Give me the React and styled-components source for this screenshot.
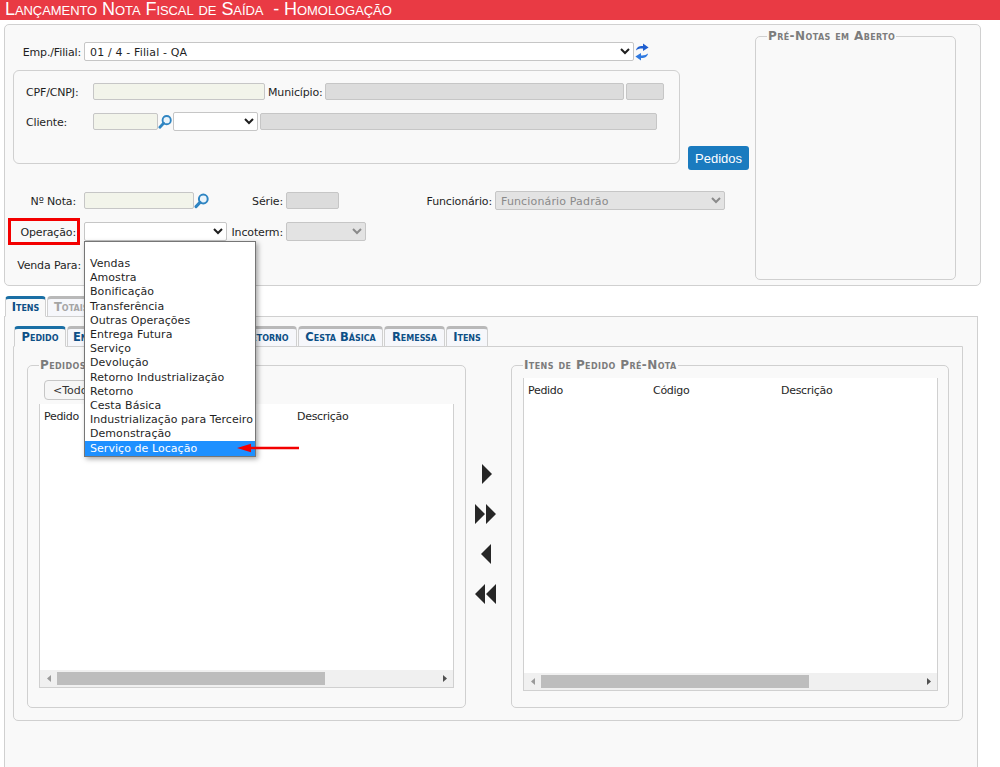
import React from 'react';
import styled, { createGlobalStyle } from 'styled-components';

const Global = createGlobalStyle`
  html, body { margin: 0; padding: 0; height: 767px; overflow: hidden; background: #fff; }
  body { font-family: "DejaVu Sans", Verdana, sans-serif; font-size: 11px; color: #1f1f1f; }
  * { box-sizing: border-box; }
`;

const Page = styled.div`display: flex; flex-direction: column; height: 767px; overflow: hidden;`;
const TitleBar = styled.header`
  height: 20px; flex: none; background: #e93a44; color: #fff; padding-left: 5px;
  font: 18px/18px "Liberation Sans", Arial, sans-serif; font-variant: small-caps; white-space: pre; letter-spacing: -0.07px;
`;
const TopPanel = styled.section`
  flex: none; height: 262px; margin: 4px 19px 0 4px; display: flex; background: #f9f9f9;
  border: 1px solid #d0d0d0; border-radius: 5px;
`;
const FormColumn = styled.div`width: 750px; flex: none; padding-top: 17px;`;
const Row = styled.div`
  display: flex; align-items: center; height: ${p => p.$h || 19}px; margin-top: ${p => p.$top || 0}px;
`;
const Label = styled.label`
  flex: none; width: ${p => p.$w}px; margin-left: ${p => p.$left || 0}px; margin-right: 3px; padding-top: 2px;
  text-align: ${p => p.$align || 'right'}; white-space: nowrap; letter-spacing: -0.15px;
`;
const Field = styled.input`
  flex: none; width: ${p => p.$w}px; height: 17px; margin: 0 0 0 ${p => p.$left || 0}px; padding: 0;
  border: 1px solid #c6c6c6; border-radius: 2px; background: ${p => (p.$editable ? '#f2f4ea' : '#dcdcdc')};
`;
const Select = styled.select`
  flex: none; width: ${p => p.$w || 100}px; height: 19px; margin: 0 0 0 ${p => p.$left || 0}px; padding: 1px 0 0 1px;
  border: 1px solid #c6c6c6; border-radius: 2px; background-color: ${p => (p.disabled ? '#e3e3e3' : '#fff')};
  color: ${p => (p.disabled ? '#8a8a8a' : '#1f1f1f')};
  font: 11px "DejaVu Sans", Verdana, sans-serif; letter-spacing: 0.15px; opacity: 1;
`;
const GroupRow = styled.div`display: flex; align-items: flex-end; height: 100px; margin: 9px 0 0 8px;`;
const Group = styled.div`
  align-self: flex-start; width: 667px; height: 94px; padding: 12px 0 0 12px;
  border: 1px solid #d0d0d0; border-radius: 6px;
`;
const PrimaryButton = styled.button`
  width: 61px; height: 24px; margin-left: 8px; padding: 0; border: 0; border-radius: 3px;
  background: #1a7bbf; color: #fff; font: 13px "Liberation Sans", Arial, sans-serif;
`;
const IconSlot = styled.span`
  flex: none; width: ${p => p.$w || 14}px; height: ${p => p.$h || 16}px; display: flex; align-items: center; justify-content: center;
`;
const Fieldset = styled.fieldset`
  flex: none; margin: ${p => p.$margin || 0}; padding: ${p => p.$pad || 0}; min-width: 0;
  width: ${p => p.$w}px; height: ${p => p.$h}px;
  border: 1px solid #d0d0d0; border-radius: 5px; display: flex; flex-direction: column;
`;
const Legend = styled.legend`
  padding: 0 1px; height: 14px; line-height: 14px; color: #7c7c7c;
  font-weight: bold; font-size: 12px; font-variant: small-caps; white-space: nowrap;
  font-family: "DejaVu Sans", Verdana, sans-serif; letter-spacing: 0.4px;
`;
const SelectAnchor = styled.div`
  position: relative; flex: none; height: 19px; width: ${p => p.$w}px; margin-left: ${p => p.$left || 0}px;
`;
const FullSelect = styled(Select)`display: block; width: 100%; margin: 0;`;
const Dropdown = styled.ul`
  position: absolute; z-index: 5; top: 100%; left: 0; width: 172px; height: 216px; margin: 0; padding: 15px 0 0;
  background: #fff; border: 1px solid #767676; list-style: none;
  box-shadow: 2px 2px 5px rgba(0,0,0,.35);
`;
const Option = styled.li`
  position: relative; height: 14.2px; line-height: ${p => (p.$active ? 15.5 : 14.2)}px; padding-left: 5px; white-space: nowrap; letter-spacing: 0.05px;
  background: ${p => (p.$active ? '#1e90ff' : 'transparent')}; color: ${p => (p.$active ? '#fff' : '#1f1f1f')};
`;
const ArrowNote = styled.svg`position: absolute; left: 152px; top: 2px; width: 62px; height: 10px;`;
const RedBox = styled.div`
  position: absolute; left: 8px; top: 218px; width: 72px; height: 27px; border: 3px solid #f30000; z-index: 3;
`;
const TabBar = styled.div`
  flex: none; display: flex; align-items: flex-end; height: 20px; margin-left: ${p => p.$left || 0}px; position: relative; z-index: 1;
  margin-top: ${p => p.$top || 0}px;
`;
const Tab = styled.div`
  flex: none; width: ${p => p.$w}px; height: 21px; margin: 0 1px -1px 0; padding: 1px 0 0 ${p => p.$inset || 0}px;
  text-align: ${p => (p.$inset ? 'left' : 'center')};
  border: 1px solid #d0d0d0; border-top: 3px solid ${p => (p.$active ? '#1a6fa5' : '#b9b9b9')};
  border-bottom-color: ${p => (p.$active ? '#f9f9f9' : '#d0d0d0')}; border-radius: 4px 4px 0 0;
  background: ${p => (p.$active ? '#f9f9f9' : '#f6f7fb')}; color: ${p => p.$color || '#0d4f86'};
  font-size: 11.5px; font-weight: bold; font-variant: small-caps; line-height: 14px; white-space: nowrap;
`;
const TabPanel = styled.section`
  flex: 1; min-height: 0; margin: 0 22px 0 4px; padding-top: 9px; background: #f9f9f9;
  border: 1px solid #d0d0d0; border-bottom: 0; display: flex; flex-direction: column;
`;
const SubPanel = styled.div`
  flex: none; width: 950px; height: 375px; margin-left: 8px; display: flex; padding: 11px 0 0 13px;
  border: 1px solid #d0d0d0; border-radius: 0 0 5px 5px;
`;
const FilterButton = styled.button`
  flex: none; width: 62px; height: 20px; margin: 0 0 4px 5px; padding: 0 0 0 8px; text-align: left;
  border: 1px solid #c6c6c6; border-radius: 4px; background: #f6f6f6; color: #333;
  font: 11px "DejaVu Sans", Verdana, sans-serif;
`;
const List = styled.div`
  flex: 1; min-height: 0; display: flex; flex-direction: column; background: #fff;
  border: 1px solid #d0d0d0; border-top: 0;
`;
const ListHead = styled.div`flex: 1; display: flex; padding: 6px 0 0 4px; align-items: flex-start;`;
const Col = styled.span`flex: none; width: ${p => p.$w}px; letter-spacing: -0.3px;`;
const ScrollBar = styled.div`flex: none; height: 17px; display: flex; align-items: center; background: #f0f0f0;`;
const ScrollButton = styled.span`flex: none; width: 17px; display: flex; justify-content: center;`;
const ScrollTrack = styled.div`flex: 1;`;
const Thumb = styled.div`height: 13px; background: #bdbdbd; width: ${p => p.$w}px;`;
const TransferColumn = styled.div`
  flex: none; width: 45px; display: flex; flex-direction: column; align-items: center; padding: 106px 6px 0 0; gap: 20px;
`;
const TransferButton = styled.svg`display: block; width: 22px; height: 20px;`;

const Lens = () => (
  <svg width="15" height="16" viewBox="0 0 15 16">
    <circle cx="9.3" cy="6" r="4.4" fill="#eaf4fb" stroke="#2f85c2" strokeWidth="2" />
    <path d="M6 9.4 2 13.6" stroke="#2f85c2" strokeWidth="3" strokeLinecap="round" />
  </svg>
);
const Refresh = () => (
  <svg width="14" height="18" viewBox="0 0 14 18">
    <path d="M1 7.5C1.5 4 4.5 2.8 8 3V0.6L13.6 4.6 8 8V5.6C5 5.4 2.8 6 1 7.5Z" fill="#1f5fd0" />
    <path d="M13 10.5C12.5 14 9.5 15.2 6 15V17.4L0.4 13.4 6 10V12.4C9 12.6 11.2 12 13 10.5Z" fill="#2f79e0" />
  </svg>
);
const Chevron = ({ dir, color }) => (
  <svg width="6" height="9" viewBox="0 0 6 9">
    <path d={dir === 'left' ? 'M5 1V8L1 4.5Z' : 'M1 1V8L5 4.5Z'} fill={color} />
  </svg>
);
const Transfer = ({ d }) => (
  <TransferButton viewBox="0 0 22 20"><path d={d} fill="#262626" /></TransferButton>
);
const Scroll = ({ thumb }) => (
  <ScrollBar>
    <ScrollButton><Chevron dir="left" color="#9a9a9a" /></ScrollButton>
    <ScrollTrack><Thumb $w={thumb} /></ScrollTrack>
    <ScrollButton><Chevron dir="right" color="#505050" /></ScrollButton>
  </ScrollBar>
);

const options = ['Vendas', 'Amostra', 'Bonificação', 'Transferência', 'Outras Operações', 'Entrega Futura', 'Serviço', 'Devolução', 'Retorno Industrialização', 'Retorno', 'Cesta Básica', 'Industrialização para Terceiro', 'Demonstração'];

export default function App() {
  return (
    <Page>
      <Global />
      <RedBox />
      <TitleBar>{'Lançamento Nota Fiscal de Saída  - Homologação'}</TitleBar>
      <TopPanel>
        <FormColumn>
          <Row>
            <Label $w={76}>Emp./Filial:</Label>
            <Select $w={550}><option>01 / 4 - Filial - QA</option></Select>
            <IconSlot $w={16} $h={19}><Refresh /></IconSlot>
          </Row>
          <GroupRow>
            <Group>
              <Row $h={17}>
                <Label $w={64} $align="left">CPF/CNPJ:</Label>
                <Field $editable $w={172} readOnly />
                <Label $w={54} $left={3}>Município:</Label>
                <Field $w={299} readOnly />
                <Field $w={38} $left={2} readOnly />
              </Row>
              <Row $h={17} $top={13}>
                <Label $w={64} $align="left">Cliente:</Label>
                <Field $editable $w={65} readOnly />
                <IconSlot><Lens /></IconSlot>
                <Select $w={85} $left={1}><option></option></Select>
                <Field $w={397} $left={2} readOnly />
              </Row>
            </Group>
            <PrimaryButton>Pedidos</PrimaryButton>
          </GroupRow>
          <Row $top={21}>
            <Label $w={71}>Nº Nota:</Label>
            <Field $editable $left={5} $w={110} readOnly />
            <IconSlot $w={15}><Lens /></IconSlot>
            <Label $w={40} $left={34}>Série:</Label>
            <Field $w={53} readOnly />
            <Label $w={66} $left={87}>Funcionário:</Label>
            <Select $w={230} disabled><option>Funcionário Padrão</option></Select>
          </Row>
          <Row $top={12}>
            <Label $w={71}>Operação:</Label>
            <SelectAnchor $w={143} $left={5}>
              <FullSelect><option></option></FullSelect>
              <Dropdown>
                {options.map(o => <Option key={o}>{o}</Option>)}
                <Option $active>
                  Serviço de Locação
                  <ArrowNote viewBox="0 0 62 10">
                    <path d="M0 5 14 0.8V3.8H62V6.2H14V9.2Z" fill="#f30000" />
                  </ArrowNote>
                </Option>
              </Dropdown>
            </SelectAnchor>
            <Label $w={54} $left={2}>Incoterm:</Label>
            <Select $w={80} disabled><option></option></Select>
          </Row>
          <Row $top={14}>
            <Label $w={76}>Venda Para:</Label>
          </Row>
        </FormColumn>
        <Fieldset $w={201} $h={251} $margin="4px 0 0 0" $pad="0 0 0 11px">
          <Legend>Pré-Notas em Aberto</Legend>
        </Fieldset>
      </TopPanel>
      <TabBar $top={10} $left={5}>
        <Tab $active $w={41}>Itens</Tab>
        <Tab $w={60} $color="#a5a5a5" $inset={6}>Totais</Tab>
      </TabBar>
      <TabPanel>
        <TabBar $left={9}>
          <Tab $active $w={52}>Pedido</Tab>
          <Tab $w={166} $inset={5}>Entrega</Tab>
          <Tab $w={63}>Retorno</Tab>
          <Tab $w={85}>Cesta Básica</Tab>
          <Tab $w={61}>Remessa</Tab>
          <Tab $w={42}>Itens</Tab>
        </TabBar>
        <SubPanel>
          <Fieldset $w={439} $h={350} $pad="8px 11px 19px 11px">
            <Legend>Pedidos</Legend>
            <FilterButton>&lt;Todos&gt;</FilterButton>
            <List>
              <ListHead><Col $w={253}>Pedido</Col><Col $w={100}>Descrição</Col></ListHead>
              <Scroll thumb={268} />
            </List>
          </Fieldset>
          <TransferColumn>
            <Transfer d="M7 0 17 10 7 20Z" />
            <Transfer d="M0 0 10 10 0 20ZM11 0 21 10 11 20Z" />
            <Transfer d="M16 0 6 10 16 20Z" />
            <Transfer d="M10 0 0 10 10 20ZM21 0 11 10 21 20Z" />
          </TransferColumn>
          <Fieldset $w={438} $h={350} $pad="6px 10px 16px 11px">
            <Legend>Itens de Pedido Pré-Nota</Legend>
            <List>
              <ListHead><Col $w={125}>Pedido</Col><Col $w={128}>Código</Col><Col $w={100}>Descrição</Col></ListHead>
              <Scroll thumb={268} />
            </List>
          </Fieldset>
        </SubPanel>
      </TabPanel>
    </Page>
  );
}
